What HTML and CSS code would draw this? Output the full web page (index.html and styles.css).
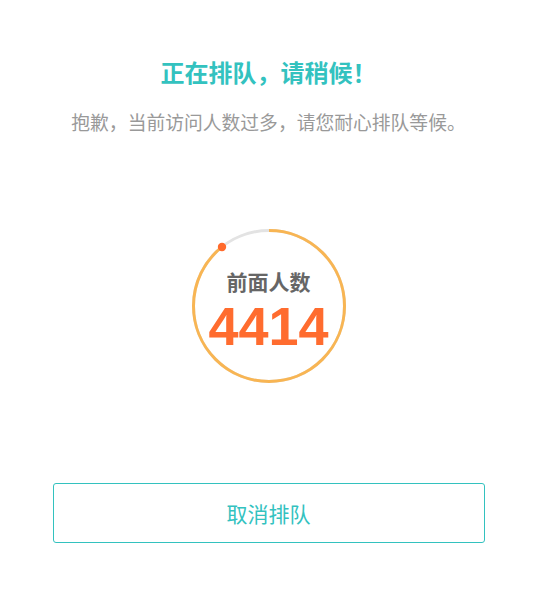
FILE: index.html
```html
<!DOCTYPE html>
<html lang="zh-CN">
<head>
<meta charset="utf-8">
<title>正在排队</title>
<link rel="stylesheet" href="styles.css">
</head>
<body>
<div class="page">
  <h1 class="title">正在排队，请稍候！</h1>
  <p class="subtitle">抱歉，当前访问人数过多，请您耐心排队等候。</p>
  <div class="ring">
    <svg class="ring-svg" width="160" height="160" viewBox="0 0 160 160">
      <circle cx="80" cy="80" r="75.5" fill="none" stroke="#e3e3e3" stroke-width="3"/>
      <circle cx="80" cy="80" r="75.5" fill="none" stroke="#f8b553" stroke-width="3"
        stroke-dasharray="422.9 474.4" transform="rotate(-90 80 80)"/>
      <circle cx="33" cy="21" r="4.2" fill="#ff6a2c"/>
    </svg>
    <div class="ring-label">前面人数</div>
    <div class="ring-count">4414</div>
  </div>
  <button class="cancel" type="button">取消排队</button>
</div>
</body>
</html>
```
FILE: styles.css
```css
* { box-sizing: border-box; }
html, body { margin: 0; padding: 0; background: #fff; }
body {
  width: 539px;
  height: 591px;
  font-family: "Noto Sans CJK SC", "Noto Sans", sans-serif;
}
.page {
  width: 537px;
  display: flex;
  flex-direction: column;
  align-items: center;
  padding-top: 57px;
}
.title {
  margin: 0;
  font-size: 24px;
  line-height: 30px;
  font-weight: 700;
  color: #33c2bf;
}
.subtitle {
  margin: 22px 0 0;
  font-size: 18.8px;
  line-height: 26px;
  color: #999;
}
.ring {
  position: relative;
  width: 160px;
  height: 160px;
  margin-top: 91px;
  display: flex;
  flex-direction: column;
  align-items: center;
  padding-top: 42px;
}
.ring-svg {
  position: absolute;
  left: 0;
  top: 0;
}
.ring-label {
  position: relative;
  font-size: 21px;
  line-height: 26px;
  font-weight: 700;
  color: #666;
}
.ring-count {
  position: relative;
  margin-top: 2px;
  font-family: "Liberation Sans", Arial, sans-serif;
  font-size: 54px;
  line-height: 60px;
  font-weight: 700;
  color: #ff6c2f;
}
.cancel {
  margin-top: 97px;
  width: 432px;
  height: 60px;
  border: 1px solid #33c2bf;
  border-radius: 3px;
  background: #fff;
  color: #33c2bf;
  font-family: "Noto Sans CJK SC", "Noto Sans", sans-serif;
  font-size: 21px;
  padding: 0;
  cursor: pointer;
}
```
